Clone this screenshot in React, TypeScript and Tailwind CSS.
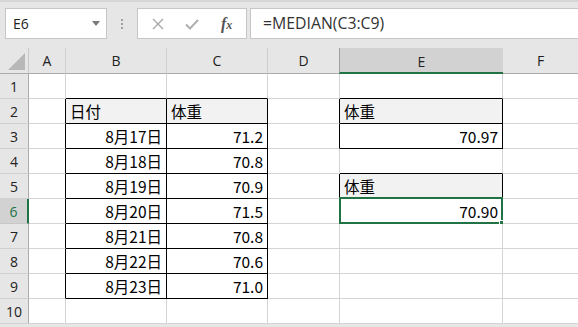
import React from "react";

const COLS = ["A", "B", "C", "D", "E", "F"];
const ROWS = [1, 2, 3, 4, 5, 6, 7, 8, 9, 10];

type Cell = { text?: string; right?: boolean; head?: boolean };

const dates = ["8月17日", "8月18日", "8月19日", "8月20日", "8月21日", "8月22日", "8月23日"];
const weights = ["71.2", "70.8", "70.9", "71.5", "70.8", "70.6", "71.0"];

const cells: Record<string, Cell> = {
  B2: { text: "日付", head: true },
  C2: { text: "体重", head: true },
  E2: { text: "体重", head: true },
  E3: { text: "70.97", right: true },
  E5: { text: "体重", head: true },
  E6: { text: "70.90", right: true },
};
dates.forEach((d, i) => {
  cells[`B${i + 3}`] = { text: d, right: true };
  cells[`C${i + 3}`] = { text: weights[i], right: true };
});

// which cells own a black right / bottom edge (table outlines)
const inBox = (c: string, r: number) =>
  (["B", "C"].includes(c) && r >= 2 && r <= 9) ||
  (c === "E" && (r === 2 || r === 3 || r === 5 || r === 6));

const blackRight = (c: string, r: number) => {
  const i = COLS.indexOf(c);
  return inBox(c, r) || (i < COLS.length - 1 && inBox(COLS[i + 1], r));
};
const blackBottom = (c: string, r: number) => inBox(c, r) || inBox(c, r + 1);

function GridCell({ c, r }: { c: string; r: number }) {
  const cell = cells[`${c}${r}`];
  const selected = c === "E" && r === 6;
  return (
    <div
      className={`relative flex items-center border-r border-b px-[4px] text-[15.5px] text-black ${
        blackRight(c, r) ? "border-r-black" : "border-r-[#d4d4d4]"
      } ${blackBottom(c, r) ? "border-b-black" : "border-b-[#d4d4d4]"} ${
        cell?.head ? "bg-[#f2f2f2]" : "bg-white"
      } ${cell?.right ? "justify-end" : "justify-start"}`}
    >
      {cell?.text && <span className="pt-[2px] leading-none">{cell.text}</span>}
      {selected && (
        <>
          <div className="absolute -top-[2px] -left-[1px] -right-[1px] -bottom-[1px] border-2 border-[#217346]" />
          <div className="absolute -right-[3px] -bottom-[3px] h-[6px] w-[6px] border border-white bg-[#217346]" />
        </>
      )}
    </div>
  );
}

export default function App() {
  return (
    <div className="h-[327px] w-[578px] overflow-hidden bg-[#e6e6e6] font-['Noto_Sans_CJK_JP',sans-serif]">
      {/* formula bar */}
      <div className="flex h-[48px] items-start border-t-2 border-t-[#d6d6d6] pt-[6px]">
        <div className="ml-[5px] flex h-[31px] w-[102px] items-center justify-between border border-[#c6c6c6] bg-white pl-[7px] pr-[6px]">
          <span className="font-['Open_Sans',sans-serif] text-[14px] text-[#222]">E6</span>
          <span className="h-0 w-0 border-x-[4px] border-t-[5px] border-x-transparent border-t-[#7a7a7a]" />
        </div>
        <div className="flex h-[31px] w-[30px] flex-col items-center justify-center gap-[2px]">
          <span className="h-[2px] w-[2px] bg-[#a0a0a0]" />
          <span className="h-[2px] w-[2px] bg-[#a0a0a0]" />
          <span className="h-[2px] w-[2px] bg-[#a0a0a0]" />
        </div>
        <div className="flex h-[31px] w-[110px] items-center border border-[#c6c6c6] bg-white">
          <svg className="ml-[14px]" width="12" height="12" viewBox="0 0 12 12">
            <path d="M1 1L11 11M11 1L1 11" stroke="#a8a8a8" strokeWidth="1.4" fill="none" />
          </svg>
          <svg className="ml-[21px]" width="14" height="12" viewBox="0 0 14 12">
            <path d="M1 6.5L5 10.5L13 2" stroke="#b0b0b0" strokeWidth="2" fill="none" />
          </svg>
          <span className="ml-[22px] font-['Liberation_Serif',serif] text-[16px] font-bold italic text-[#555]">
            f<span className="text-[12px]">x</span>
          </span>
        </div>
        <div className="ml-[3px] flex h-[31px] flex-1 items-center border border-r-0 border-[#c6c6c6] bg-white pl-[12px]">
          <span className="font-['Open_Sans',sans-serif] text-[15.8px] text-[#333]">=MEDIAN(C3:C9)</span>
        </div>
      </div>

      {/* sheet */}
      <div className="grid grid-cols-[29px_37px_101px_101px_72px_163px_76px] grid-rows-[26px_repeat(10,25px)]">
        <div className="relative border-r border-b border-r-[#c8c8c8] border-b-[#ababab] bg-[#e6e6e6]">
          <svg className="absolute bottom-[3px] right-[3px]" width="17" height="17" viewBox="0 0 17 17">
            <path d="M17 0V17H0Z" fill="#b8b8b8" />
          </svg>
        </div>
        {COLS.map((c) => (
          <div
            key={c}
            className={`flex items-center justify-center font-['Open_Sans',sans-serif] text-[14px] text-[#222] ${
              c === "E"
                ? "border-b-2 border-l border-b-[#217346] border-l-[#a0a0a0] bg-[#d2d2d2] -ml-[1px] pt-[2px]"
                : "border-r border-b border-r-[#cfcfcf] border-b-[#ababab] bg-[#e6e6e6]"
            }`}
          >
            {c}
          </div>
        ))}
        {ROWS.map((r) => (
          <React.Fragment key={r}>
            <div
              className={`flex items-center justify-center font-['Open_Sans',sans-serif] text-[14px] ${
                r === 6
                  ? "border-r-2 border-b border-r-[#217346] border-b-[#c8c8c8] bg-[#d2d2d2] text-[#217346]"
                  : "border-r border-b border-r-[#ababab] border-b-[#d0d0d0] bg-[#e6e6e6] text-[#222]"
              }`}
            >
              {r}
            </div>
            {COLS.map((c) => (
              <GridCell key={c} c={c} r={r} />
            ))}
          </React.Fragment>
        ))}
      </div>
    </div>
  );
}
